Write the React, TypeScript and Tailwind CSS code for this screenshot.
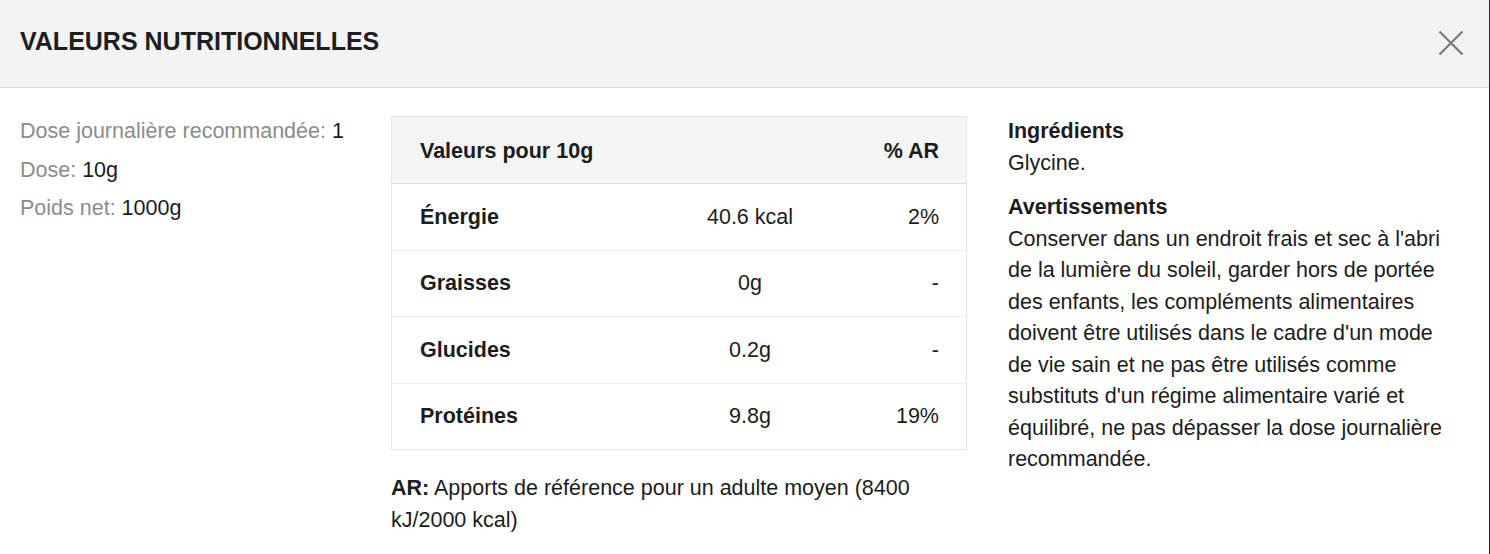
import React from "react";

interface Row {
    label: string;
    value: string;
    ar: string;
}

const rows: Row[] = [
    { label: "Énergie", value: "40.6 kcal", ar: "2%" },
    { label: "Graisses", value: "0g", ar: "-" },
    { label: "Glucides", value: "0.2g", ar: "-" },
    { label: "Protéines", value: "9.8g", ar: "19%" },
];

const facts = [
    { label: "Dose journalière recommandée:", value: "1" },
    { label: "Dose:", value: "10g" },
    { label: "Poids net:", value: "1000g" },
];

export default function App() {
    return (
        <div
            className="w-[1490px] h-[554px] bg-white border-r border-[#2a2a2a] text-[#1c1c1c] overflow-hidden"
            style={{ fontFamily: '"Liberation Sans", Arial, Helvetica, sans-serif' }}
        >
            <div className="h-[88px] bg-[#f3f3f3] border-b border-[#dcdcdc] flex items-center justify-between pl-[20px] pr-[25px]">
                <h1 className="text-[25px] font-bold uppercase text-[#1e1e1e] pb-[3px]">
                    Valeurs nutritionnelles
                </h1>
                <button type="button" className="w-[26px] h-[26px] flex items-center justify-center mb-[2px]">
                    <svg width="26" height="26" viewBox="0 0 26 26" fill="none">
                        <path
                            d="M1.5 1.5 L24.5 24.5 M24.5 1.5 L1.5 24.5"
                            stroke="#7a7a7a"
                            strokeWidth="2.2"
                        />
                    </svg>
                </button>
            </div>

            <div className="flex px-[20px] pt-[28px] text-[21.5px]">
                <div className="w-[351px] mr-[20px] flex flex-col gap-[8.5px] leading-[30px]">
                    {facts.map((f) => (
                        <div key={f.label} className="whitespace-nowrap">
                            <span className="text-[#8c8c8c]">{f.label}</span>{" "}
                            <span className="text-[#1c1c1c]">{f.value}</span>
                        </div>
                    ))}
                </div>

                <div className="w-[576px] mr-[41px]">
                    <table className="w-full border-collapse border border-[#e6e6e6]">
                        <thead>
                            <tr className="h-[67px] bg-[#f4f4f4] border-b border-[#dedede]">
                                <th colSpan={2} className="text-left font-bold pl-[28px] pt-[2px]">
                                    Valeurs pour 10g
                                </th>
                                <th className="text-right font-bold pr-[27px] pt-[2px]">% AR</th>
                            </tr>
                        </thead>
                        <tbody>
                            {rows.map((r, i) => (
                                <tr
                                    key={r.label}
                                    className={`h-[66.5px] ${i < rows.length - 1 ? "border-b border-[#ececec]" : ""}`}
                                >
                                    <td className="w-[260px] pl-[28px] font-bold">{r.label}</td>
                                    <td className="text-center">{r.value}</td>
                                    <td className="w-[118px] text-right pr-[27px]">{r.ar}</td>
                                </tr>
                            ))}
                        </tbody>
                    </table>
                    <p className="mt-[22px] leading-[32px]">
                        <span className="font-bold">AR:</span> Apports de référence pour un adulte moyen (8400
                        kJ/2000 kcal)
                    </p>
                </div>

                <div className="w-[445px] leading-[31.5px]">
                    <h3 className="font-bold">Ingrédients</h3>
                    <p>Glycine.</p>
                    <h3 className="font-bold mt-[13px]">Avertissements</h3>
                    <p>
                        Conserver dans un endroit frais et sec à l'abri de la lumière du soleil, garder hors de
                        portée des enfants, les compléments alimentaires doivent être utilisés dans le cadre
                        d'un mode de vie sain et ne pas être utilisés comme substituts d'un régime alimentaire
                        varié et équilibré, ne pas dépasser la dose journalière recommandée.
                    </p>
                </div>
            </div>
        </div>
    );
}
